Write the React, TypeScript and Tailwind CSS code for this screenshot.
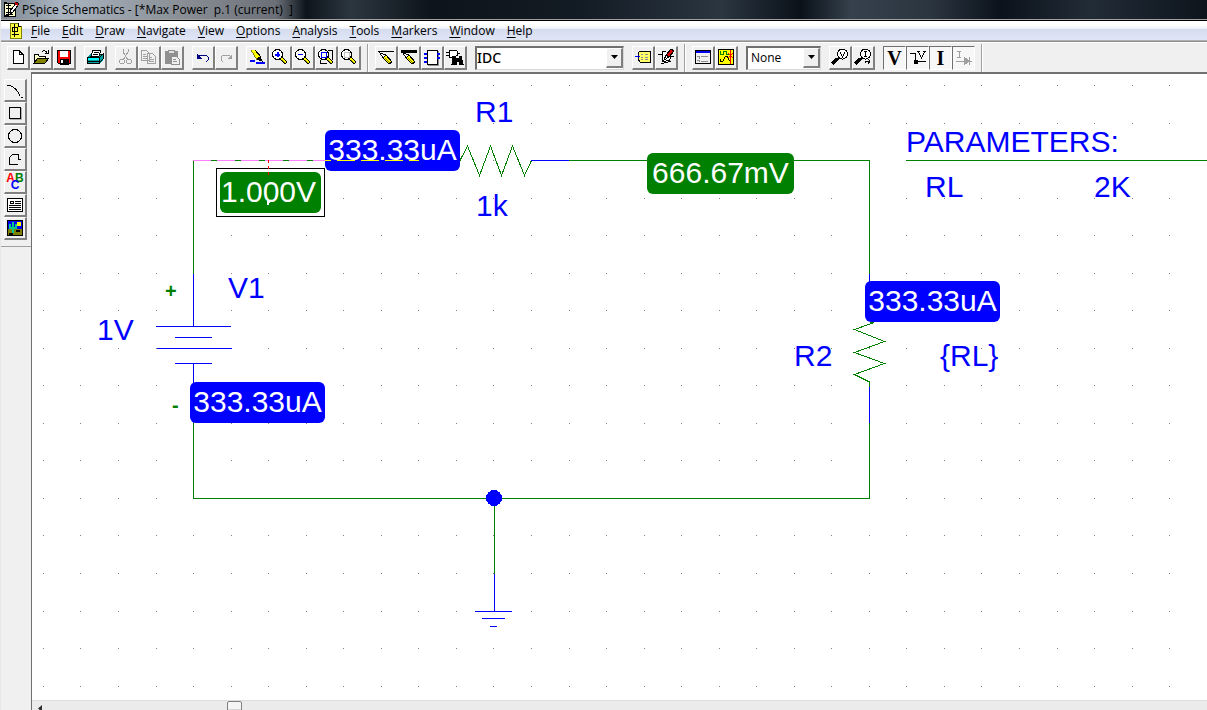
import React from "react";

type P = { children?: React.ReactNode };

const Svg = ({ children }: P) => (
  <svg width="18" height="18" viewBox="0 0 18 18" fill="none" stroke="#000" strokeWidth="1" shapeRendering="crispEdges" aria-hidden="true">
    {children}
  </svg>
);

const Tool = ({ label, pressed, disabled, children }: P & { label: string; pressed?: boolean; disabled?: boolean }) => (
  <button
    type="button"
    aria-label={label}
    disabled={disabled}
    className={
      pressed
        ? "flex h-6 w-[23px] shrink-0 items-center justify-center border border-t-[#707070] border-l-[#707070] border-r-white border-b-white bg-[#f7f7f7]"
        : "flex h-6 w-[23px] shrink-0 items-center justify-center border-t border-l border-r-2 border-b-2 border-t-white border-l-white border-r-[#808080] border-b-[#808080] bg-[#f0f0f0]"
    }
  >
    {children}
  </button>
);

const Group = ({ children }: P) => <div className="flex shrink-0">{children}</div>;
const Divider = () => <div className="-mx-0.5 h-7 w-0.5 shrink-0 self-center border-l border-[#a0a0a0] bg-white" />;

const Pencil = () => (
  <>
    <path d="M3 5L6 10L12 16L15 14L9 7Z" fill="#ff0" />
    <path d="M3 5L6 10L9 7Z" fill="#fff" />
    <path d="M8 10l5 5" stroke="#808000" />
  </>
);

const Lens = ({ children }: P) => (
  <Svg>
    <path d="M9 11L11 9L16 14L14 16Z" fill="#ff0" />
    <path d="M11 12l3 3" stroke="#808000" />
    <circle cx="6.500" cy="6.500" r="5" fill="#fff" />
    {children}
  </Svg>
);

const Probe = ({ letter }: { letter: string }) => (
  <Svg>
    <circle cx="11.500" cy="6" r="5" fill="#fff" />
    <path d="M8 10l-3 3" strokeWidth="2" />
    <path d="M1 16l5-5" strokeWidth="3" />
    {letter === "V" ? <path d="M9.500 4v1l2 4 2-4V4" /> : <path d="M10 3.500h3M11.500 3v6M10 8.500h3" />}
    {letter === "I" && <path d="M11 15v-2h5M14 11l2 2-2 3" />}
  </Svg>
);

const Combo = ({ label, value, className }: { label: string; value: string; className: string }) => (
  <div className="relative flex h-6 shrink-0 border-t-2 border-l-2 border-r border-b border-t-[#707070] border-l-[#707070] border-r-[#d8d8d8] border-b-[#d8d8d8] bg-white">
    <select aria-label={label} defaultValue={value} className={className}>
      <option>{value}</option>
    </select>
    <span className="pointer-events-none absolute top-0 right-0 flex h-5 w-[17px] items-center justify-center border-t border-l border-r-2 border-b-2 border-t-white border-l-white border-r-[#808080] border-b-[#808080] bg-[#f0f0f0]">
      <svg width="7" height="4" viewBox="0 0 7 4" aria-hidden="true"><path d="M0 0h7L3.500 4z" fill="#000" /></svg>
    </span>
  </div>
);

const menus = ["File", "Edit", "Draw", "Navigate", "View", "Options", "Analysis", "Tools", "Markers", "Window", "Help"];

const AppIcon = () => (
  <svg width="16" height="17" viewBox="0 0 16 17" shapeRendering="crispEdges" aria-hidden="true">
    <path d="M1 2h11v13H1z" fill="#ffc" stroke="#000" />
    <path d="M3 4h5M5 2v12M3 7h4v4H3M3 13h7" stroke="#000" fill="none" />
    <path d="M14 1l-6 8-1 4 3-2 6-8z" fill="#fff" stroke="#000" />
    <path d="M12 2l3 2" stroke="#c00000" strokeWidth="2" />
    <path d="M1 2h3M1 15h5" stroke="#000" strokeWidth="2" />
  </svg>
);

const DocIcon = () => (
  <svg width="15" height="17" viewBox="0 0 15 17" shapeRendering="crispEdges" aria-hidden="true">
    <path d="M2 1h8l3 3v12H2z" fill="#ffff40" stroke="#808000" />
    <path d="M10 1v3h3" fill="#fff" stroke="#000" />
    <path d="M6.500 2v13M4 5h5v4H4zM4 12h7" stroke="#000" fill="none" />
  </svg>
);

const MainToolbar = () => (
  <div role="toolbar" aria-label="Standard" className="flex h-[30px] items-center gap-2 overflow-hidden border-t border-white bg-[#f0f0f0] pl-1.5">
    <Group>
      <Tool label="New"><Svg><path d="M4 2.500h6l4 4v9H4z" fill="#fff" /><path d="M10 2v4h4" /></Svg></Tool>
      <Tool label="Open"><Svg>
        <path d="M2 15V6h4l1 2h6v3" fill="#ffc" /><path d="M2 15l4-5h11l-4 5z" fill="#808000" /><path d="M10 4q3-3 5 1M13 5h3V2" />
      </Svg></Tool>
      <Tool label="Save"><Svg>
        <path d="M2.500 2.500h13v13h-12l-1-1z" fill="#f00" /><path d="M5 3h8v6H5z" fill="#fff" stroke="none" /><path d="M5 11h8v5H5z" fill="#000" /><path d="M6 12h2v3H6z" fill="#fff" stroke="none" />
      </Svg></Tool>
    </Group>
    <Group>
      <Tool label="Print"><Svg>
        <path d="M1 9l4-3h12v6l-4 4H1z" fill="#00a0a0" stroke="none" />
        <path d="M5 8l2-6h8l-2 6z" fill="#fff" /><path d="M8 4h5M7 6h5" />
        <path d="M1.500 15V9.500h12V15zM13 15l4-4V6l-4 4M14 6h3" /><path d="M2 11h11" stroke="#0ff" strokeWidth="2" /><path d="M2 13h11" />
      </Svg></Tool>
    </Group>
    <Group>
      <Tool label="Cut" disabled><Svg><g stroke="#a0a0a0"><path d="M6 1v3l5 8M11 1v3l-5 8" /><circle cx="5" cy="13.500" r="2.500" /><circle cx="12" cy="13.500" r="2.500" /></g></Svg></Tool>
      <Tool label="Copy" disabled><Svg><g stroke="#a0a0a0" fill="#f0f0f0"><path d="M1.500 2.500h5l3 3v7h-8zM7.500 5.500h5l3 3v7h-8z" /><path d="M3 6h3M3 8h4M3 10h4M9 9h3M9 11h5M9 13h5" /></g></Svg></Tool>
      <Tool label="Paste" disabled><Svg><path d="M2 3h12v12H2z" fill="#909090" stroke="#909090" /><path d="M5 2h6v3H5z" fill="#e0e0e0" stroke="#909090" /><path d="M8 8h5l3 3v5H8z" fill="#f0f0f0" stroke="#909090" /><path d="M10 11h3M10 13h4" stroke="#909090" /></Svg></Tool>
    </Group>
    <Group>
      <Tool label="Undo"><Svg><path d="M4 9l2-2h6l2 2v3l-2 2" stroke="#000080" /><path d="M3 6v5h5z" fill="#000080" stroke="none" /></Svg></Tool>
      <Tool label="Redo" disabled><Svg><path d="M14 9l-2-2H6L4 9v3l2 2" stroke="#a0a0a0" /><path d="M15 6v5h-5z" fill="#a0a0a0" stroke="none" /></Svg></Tool>
    </Group>
    <Group>
      <Tool label="Redraw"><Svg>
        <path d="M3 2h4l6 8-4 2z" fill="#ff0" stroke="none" /><path d="M3 2l6 10" stroke="#808000" /><path d="M7 2l6 7" /><path d="M9 11l3-2 2 4z" fill="#000" /><path d="M2 13h5M8 15h9" stroke="#00f" strokeWidth="2" />
      </Svg></Tool>
      <Tool label="Zoom In"><Lens><path d="M4 6.500h5M6.500 4v5" stroke="#00f" strokeWidth="2" /></Lens></Tool>
      <Tool label="Zoom Out"><Lens><path d="M4 6.500h5" stroke="#00f" /></Lens></Tool>
      <Tool label="Zoom Area"><Lens><path d="M4 4h5v5H4z" stroke="#00f" /><path d="M11 2h4v10M3 12v3h7" /></Lens></Tool>
      <Tool label="Zoom Fit"><Lens><path d="M4 4h5v5H4z" stroke="#c0c0c0" /></Lens></Tool>
    </Group>
    <Divider />
    <Group>
      <Tool label="Draw Wire"><Svg><path d="M1 3.500h16" /><Pencil /></Svg></Tool>
      <Tool label="Draw Bus"><Svg><path d="M1 3h16" strokeWidth="3" /><Pencil /></Svg></Tool>
      <Tool label="Draw Block"><Svg><path d="M4 2h10v14H4z" fill="#fff" /><path d="M15 3v14H5" stroke="#909090" /><path d="M1 5.500h3M1 9.500h3M1 13.500h3M14 5.500h3M14 9.500h3" stroke="#00f" strokeWidth="2" /></Svg></Tool>
      <Tool label="Get New Part"><Svg><path d="M3 2h5q4 0 4 3t-4 4H3z" fill="#fff" /><path d="M0 4h3M0 7h3M12 5h2" /><path d="M7 8h2v2h4V8h2l2 8h-4v-3h-3v3H6z" fill="#000" /></Svg></Tool>
    </Group>
    <Combo label="Part" value="IDC" className="h-[21px] w-[146px] appearance-none bg-white font-['Noto_Sans'] text-[14px] leading-5 font-medium text-black outline-none" />
    <Group>
      <Tool label="Edit Attributes"><Svg><path d="M4 5l2-2h10v11H6l-2-3z" fill="#ff6" /><path d="M1 8.500h5" stroke="#00f" /><path d="M4 6v5" stroke="#000080" /><path d="M7 6h2M11 6h3M7 9h2M11 9h3M7 11h2M11 11h3" stroke="#909090" /></Svg></Tool>
      <Tool label="Edit Symbol"><Svg><path d="M1 6.500h4M13 8.500h4M5 3h4M5 3v10h4q5 0 5-5" fill="#fff" /><path d="M14 1l3 2-5 6-3-2z" fill="#e00000" /><path d="M9 7l-2 5 5-3z" fill="#fff" /><path d="M4 16l10-3" /></Svg></Tool>
    </Group>
    <Divider />
    <Group>
      <Tool label="Setup Analysis"><Svg><path d="M1.500 2.500h15v13h-15z" fill="#f0f0f0" /><path d="M2 4h14" stroke="#0000f0" strokeWidth="2" /><path d="M3 8h2v3M3 12h2v2M7 8h7M7 13h7" stroke="#909090" /></Svg></Tool>
      <Tool label="Simulate"><Svg><path d="M1.500 1.500h15v15h-15z" fill="#ff0" /><path d="M3 3v3h3V3h3v3h3" stroke="#008000" /><path d="M3 11v3l3-1 2-4 2-1 2 4 2 2" /><path d="M13.500 2v14M11 5l5 5M16 5l-5 5" stroke="#f00" /></Svg></Tool>
    </Group>
    <Combo label="Marker" value="None" className="h-[21px] w-[72px] appearance-none bg-white pl-[3px] font-['Open_Sans'] text-[12px] leading-5 text-black outline-none" />
    <Group>
      <Tool label="Voltage Marker"><Probe letter="V" /></Tool>
      <Tool label="Current Marker"><Probe letter="I" /></Tool>
    </Group>
    <Group>
      <Tool label="Enable Bias Voltage Display" pressed><span className="font-['Liberation_Serif'] text-[20px] leading-5 font-bold">V</span></Tool>
      <Tool label="Show Voltage on Selected Net" pressed><Svg><path d="M1 4.500h5v8h11" /><path d="M8 2.500h3M14 2.500h3M9.500 3l3 6 3-6" /><path d="M5 11h3v3H5z" fill="#000" /></Svg></Tool>
      <Tool label="Enable Bias Current Display" pressed><span className="font-['Liberation_Serif'] text-[20px] leading-5 font-bold">I</span></Tool>
      <Tool label="Show Current on Selected Part" pressed disabled><Svg><g stroke="#a0a0a0"><path d="M2 2h4M4 2v6M2 8h4M1 12h16M14 8v8" /><path d="M9 8l5 4-5 4z" fill="#a0a0a0" /></g></Svg></Tool>
    </Group>
    <Divider />
  </div>
);

const DrawToolbar = () => (
  <div className="w-[30px] shrink-0 bg-[#f0f0f0]">
    <div role="toolbar" aria-label="Drawing" aria-orientation="vertical" className="flex h-[175px] flex-col border-b border-[#a0a0a0] pt-[7px] pl-[3px] [&>button]:h-[23px]">
      <Tool label="Arc"><Svg><path d="M1 4q9 1 13 11" /><path d="M15 16h2" /></Svg></Tool>
      <Tool label="Box"><Svg><path d="M4 15h11V4" stroke="#b0b0b0" /><path d="M3 3h11v11H3z" fill="#f0f0f0" /></Svg></Tool>
      <Tool label="Circle"><Svg><circle cx="9" cy="9" r="6.500" /></Svg></Tool>
      <Tool label="Polyline"><Svg><path d="M12 14H3V8l4-4h5v5h3" /></Svg></Tool>
      <Tool label="Text">
        <span aria-hidden="true" className="flex flex-col items-center font-['Liberation_Sans'] text-[12px] leading-[7px] font-bold">
          <span className="flex"><span className="text-[#ff0000]">A</span><span className="text-[#008000]">B</span></span>
          <span className="text-[#0000ff]">C</span>
        </span>
      </Tool>
      <Tool label="Text Box"><Svg><path d="M1.500 2.500h15v13h-15z" fill="#fff" /><path d="M4 8V5h3v3M4 7h3M9 5h6M9 7h6M3 9.500h12M3 11.500h12M3 13.500h12" /></Svg></Tool>
      <Tool label="Picture"><Svg>
        <path d="M1 1h16v16H1z" fill="#808000" stroke="none" /><path d="M1 1h16v9H1z" fill="#0000f0" stroke="none" /><circle cx="13" cy="5" r="2.500" fill="#ff0" stroke="none" />
        <path d="M7 3v11M4 5v4h6V5" stroke="#0c8" strokeWidth="2" /><path d="M3 15h4M10 12h4" strokeWidth="2" /><path d="M1.500 1.500h15v15h-15z" />
      </Svg></Tool>
    </div>
  </div>
);

const Grid = () => {
  const dots: React.ReactNode[] = [];
  for (let j = 0; j < 60; j++)
    for (let i = 0; i < 80; i++)
      dots.push(<rect key={`${i}-${j}`} x={Math.floor(11.45 + i * 37.54)} y={Math.floor(11.5 + j * 37.54)} width="1" height="1" />);
  return <g fill="#808080">{dots}</g>;
};

const label = "absolute whitespace-pre text-[30px] leading-[34px] text-[#0000ff]";
const bias = "absolute flex h-[41px] items-center justify-center rounded-md pb-0.5 text-[30px] leading-9 text-white";

const Schematic = () => (
  <main aria-label="Schematic page" className="relative min-h-0 flex-1 overflow-hidden bg-white font-['Liberation_Sans']">
    <svg className="absolute inset-0 h-full w-full" aria-hidden="true" fill="none" shapeRendering="crispEdges">
      <Grid />
      <g transform="translate(-32 -74)">
        <g stroke="#008000">
          <path d="M193.500 274V160.500H325M193.500 423V498.500H869.500V423M569 160.500H869.500V274M869.500 382V387M494.500 498V574M906 160.500H4000" />
          <path d="M460 160.500L467.500 146L479.500 175.500L490.500 146L501.500 175.500L512.500 146L524.500 175.500L531.500 160.500" />
          <path d="M869.500 322.500H874L854.500 329.500L884.500 341.500L854.500 352.500L884.500 363.500L854.500 374.500L869.500 382" />
        </g>
        <g stroke="#0000ff">
          <path d="M193.500 274V326M156 326.500H231M175 337.500H212M157 348.500H232M175 363.500H212M193.500 363V423" />
          <path d="M531 160.500H569M869.500 274V282M869.500 387V423M494.500 574V611M475 611.500H512M482 618.500H505M490 626.500H497" />
        </g>
        <path d="M193 160.500H325" stroke="#ff80ff" strokeDasharray="18 6" />
        <circle cx="494" cy="498" r="8" fill="#0000ff" />
      </g>
    </svg>

    <span className={`${label} top-[21px] left-[443px]`}>R1</span>
    <span className={`${label} top-[115px] left-[444px]`}>1k</span>
    <span className={`${label} top-[197px] left-[196px]`}>V1</span>
    <span className={`${label} top-[239px] left-[65px]`}>1V</span>
    <span className={`${label} top-[265px] left-[762px]`}>R2</span>
    <span className={`${label} top-[265px] left-[908px]`}>{"{RL}"}</span>
    <span className={`${label} top-[51px] left-[874px]`}>PARAMETERS:</span>
    <span className={`${label} top-[96px] left-[893px]`}>RL</span>
    <span className={`${label} top-[96px] left-[1062px]`}>2K</span>
    <span className="absolute top-[207px] left-[133px] text-[20px] leading-5 font-bold text-[#008000]">+</span>
    <span className="absolute top-[321px] left-[140px] text-[20px] leading-5 font-bold text-[#008000]">-</span>

    <span className={`${bias} top-[56px] left-[293px] w-[135px] bg-[#0000ff]`}>333.33uA</span>
    <span className={`${bias} top-[308px] left-[158px] w-[135px] bg-[#0000ff]`}>333.33uA</span>
    <span className={`${bias} top-[207px] left-[833px] w-[135px] bg-[#0000ff]`}>333.33uA</span>
    <span className={`${bias} top-[79px] left-[615px] w-[147px] bg-[#008000]`}>666.67mV</span>
    <div className="absolute top-[94px] left-[184px] flex border border-black p-[3px]">
      <span className="flex h-[41px] w-[101px] items-center justify-center rounded-md bg-[#008000] pr-1 pb-0.5 text-[30px] leading-9 text-white">1.000V</span>
    </div>
    <svg className="absolute top-0 left-0" width="400" height="140" aria-hidden="true" shapeRendering="crispEdges">
      <path d="M293 86.500H387" stroke="#ffff00" strokeDasharray="18 6" strokeDashoffset="12" />
      <path d="M236.500 86V101" stroke="#ff0000" strokeDasharray="3 3" />
      <path d="M235 127h3v2h-1v2h-2z" fill="#fff" />
    </svg>
  </main>
);

export default function App() {
  return (
    <div className="flex h-screen flex-col overflow-hidden border-l border-[#e8e8e8] bg-[#f0f0f0] text-black">
      <header className="flex h-5 shrink-0 items-center gap-[3px] border-b border-[#a0a0a0] bg-[linear-gradient(90deg,#7c8792_0px,#a9b4c0_60px,#8a8f96_180px,#6b7078_275px,#0d141c_305px,#2c363f_350px,#0d141b_430px,#131b24_580px,#2b3641_720px,#0a1119_800px,#36414d_850px,#2b3540_930px,#0b121b_1000px,#222c37_1090px,#0d141c_1207px)] pl-0.5">
        <AppIcon />
        <h1 className="font-['Open_Sans'] text-[12px] leading-4 font-normal whitespace-pre">PSpice Schematics - [*Max Power  p.1 (current)  ]</h1>
      </header>
      <div className="flex h-[21px] shrink-0 items-center border-t border-b border-t-black border-b-[#b0b0b0] bg-[linear-gradient(#fff_0%,#fff_25%,#eef1f9_40%,#d5dcee_42%,#e0e6f6_100%)] pl-[7px]">
        <DocIcon />
        <nav aria-label="Main menu" className="flex pl-0.5">
          {menus.map((m) => (
            <button key={m} type="button" className="px-1.5 font-['Open_Sans'] text-[12px] leading-4">
              <span className="underline underline-offset-2">{m[0]}</span>{m.slice(1)}
            </button>
          ))}
        </nav>
      </div>
      <div className="shrink-0 border-t border-[#909090]"><MainToolbar /></div>
      <div className="flex min-h-0 flex-1">
        <DrawToolbar />
        <div className="flex min-w-0 flex-1 flex-col border-t-2 border-l border-[#707070]">
          <Schematic />
          <div aria-hidden="true" className="flex h-[10px] shrink-0 overflow-hidden border-t border-[#dcdcdc] bg-[#ebebeb]">
            <div className="flex w-[195px] pt-1 pl-1.5">
              <svg width="4" height="7" viewBox="0 0 4 7"><path d="M4 0v7L0 3.500z" fill="#303030" /></svg>
            </div>
            <div className="h-4 w-[15px] rounded-xs border border-[#808080] bg-linear-to-b from-[#f5f5f5] from-50% to-[#d5d5d5] to-50%" />
          </div>
        </div>
      </div>
    </div>
  );
}
